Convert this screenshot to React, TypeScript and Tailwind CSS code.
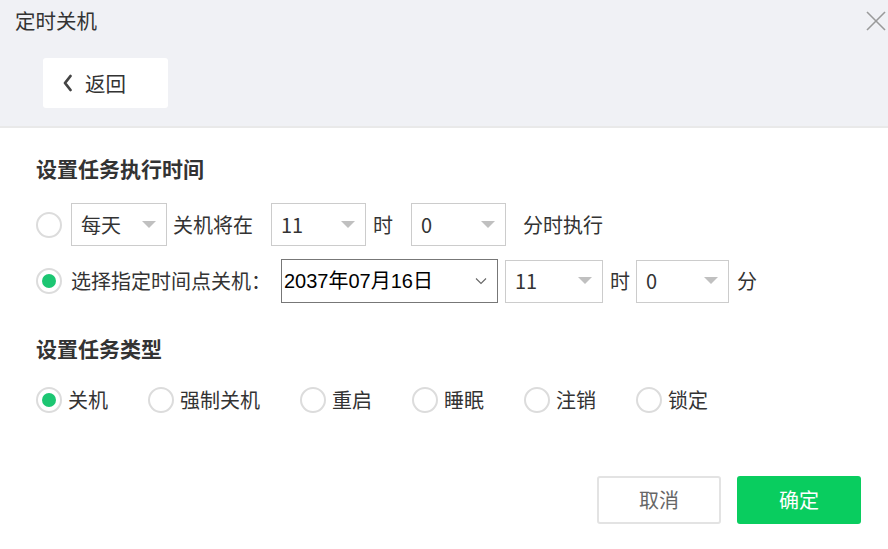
import React from "react";

const Tri = () => (
  <svg width="14" height="8" viewBox="0 0 14 8" className="shrink-0">
    <polygon points="0,0 14,0 7,7" fill="#c0c0c0" />
  </svg>
);

function Select({ w, text, h = 43 }: { w: number; text: string; h?: number }) {
  return (
    <div
      className="flex items-center justify-between border border-[#cccccc] bg-white pl-[9px] pr-[10px] text-[20px] text-[#333]"
      style={{ width: w, height: h }}
    >
      <span className="leading-none">{text}</span>
      <Tri />
    </div>
  );
}

function Radio({ checked }: { checked?: boolean }) {
  return (
    <div className="flex h-[26px] w-[26px] shrink-0 items-center justify-center rounded-full border-2 border-[#dcdcdc] bg-white">
      {checked && <div className="h-[14px] w-[14px] rounded-full bg-[#1cc672]" />}
    </div>
  );
}

export default function App() {
  const types = ["关机", "强制关机", "重启", "睡眠", "注销", "锁定"];
  return (
    <div
      className="relative h-[549px] w-[888px] overflow-hidden bg-white text-[#333]"
      style={{ fontFamily: '"Noto Sans CJK SC", "Microsoft YaHei", sans-serif' }}
    >
      {/* header */}
      <div className="h-[128px] border-b-2 border-[#e9e9e9] bg-[#f0f1f5]">
        <div className="pl-[15px] pt-[6px] text-[20.5px] leading-[28px] text-[#333]">定时关机</div>
        <div className="ml-[43px] mt-[24px] flex h-[50px] w-[125px] items-center rounded-[3px] bg-white pl-[19px]">
          <svg width="11" height="18" viewBox="0 0 11 18">
            <polyline points="8.5,2 3,9 8.5,16" fill="none" stroke="#444" strokeWidth="2.8" strokeLinecap="round" strokeLinejoin="round" />
          </svg>
          <span className="ml-[12px] text-[20.5px] leading-none text-[#333]">返回</span>
        </div>
      </div>
      <button className="absolute right-[2px] top-[11px] h-[20px] w-[20px]" aria-label="close">
        <svg width="20" height="20" viewBox="0 0 20 20">
          <line x1="1" y1="1" x2="19" y2="19" stroke="#9a9a9a" strokeWidth="1.6" />
          <line x1="19" y1="1" x2="1" y2="19" stroke="#9a9a9a" strokeWidth="1.6" />
        </svg>
      </button>

      {/* body */}
      <div className="pl-[36px]">
        <div className="mt-[26px] text-[21px] font-bold leading-[28px] text-[#333]">设置任务执行时间</div>

        <div className="mt-[21px] flex h-[43px] items-center text-[20px]">
          <Radio />
          <div className="ml-[9px]">
            <Select w={96} text="每天" />
          </div>
          <span className="ml-[6px] leading-none">关机将在</span>
          <div className="ml-[18px]">
            <Select w={95} text="11" />
          </div>
          <span className="ml-[7px] leading-none">时</span>
          <div className="ml-[18px]">
            <Select w={95} text="0" />
          </div>
          <span className="ml-[17px] leading-none">分时执行</span>
        </div>

        <div className="mt-[13px] flex h-[44px] items-center text-[20px]">
          <Radio checked />
          <span className="ml-[9px] leading-none">选择指定时间点关机：</span>
          <div
            className="ml-[10px] flex h-[44px] w-[217px] items-center justify-between border border-[#777] pl-[2px] pr-[10px] text-[20px] text-black"
            style={{ fontFamily: '"Liberation Sans", "Noto Sans CJK SC", sans-serif' }}
          >
            <span className="leading-none">2037年07月16日</span>
            <svg width="12" height="8" viewBox="0 0 12 8">
              <polyline points="1,1.5 6,6.5 11,1.5" fill="none" stroke="#666" strokeWidth="1.1" />
            </svg>
          </div>
          <div className="ml-[7px]">
            <Select w={98} text="11" />
          </div>
          <span className="ml-[7px] leading-none">时</span>
          <div className="ml-[6px]">
            <Select w={93} text="0" />
          </div>
          <span className="ml-[8px] leading-none">分</span>
        </div>

        <div className="mt-[31px] text-[21px] font-bold leading-[28px] text-[#333]">设置任务类型</div>

        <div className="mt-[25px] flex items-center gap-[40px] text-[20px]">
          {types.map((t, i) => (
            <div key={t} className="flex items-center gap-[6px]">
              <Radio checked={i === 0} />
              <span className="leading-none">{t}</span>
            </div>
          ))}
        </div>
      </div>

      {/* footer */}
      <div className="mt-[63px] flex justify-end gap-[16px] pr-[27px]">
        <button className="flex h-[48px] w-[124px] items-center justify-center rounded-[3px] border-2 border-[#e3e3e3] bg-white text-[20px] text-[#666]">
          取消
        </button>
        <button className="flex h-[48px] w-[124px] items-center justify-center rounded-[3px] bg-[#09cd5f] text-[20px] text-white">
          确定
        </button>
      </div>
    </div>
  );
}
